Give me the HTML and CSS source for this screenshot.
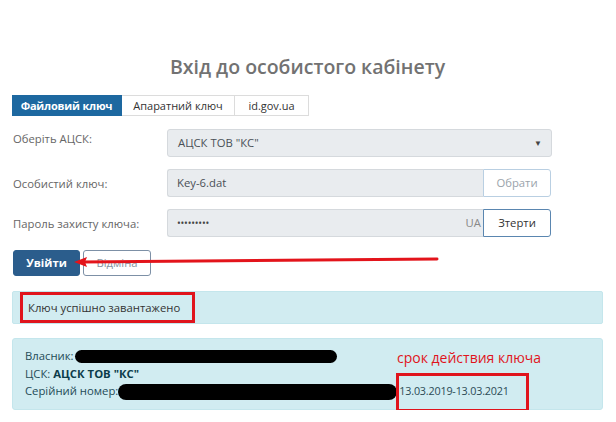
FILE: index.html
```html
<!DOCTYPE html>
<html lang="uk">
<head>
<meta charset="utf-8">
<title>Вхід до особистого кабінету</title>
<link rel="stylesheet" href="styles.css">
</head>
<body>
<div class="page">
  <h1 class="title">Вхід до особистого кабінету</h1>
  <div class="tabs">
    <div class="tab active t1">Файловий ключ</div>
    <div class="tab t2">Апаратний ключ</div>
    <div class="tab t3">id.gov.ua</div>
  </div>
  <div class="form">
    <div class="row top">
      <div class="label">Оберіть АЦСК:</div>
      <div class="field select"><span>АЦСК ТОВ "КС"</span><span class="caret">▼</span></div>
    </div>
    <div class="row">
      <div class="label">Особистий ключ:</div>
      <div class="group">
        <div class="field grow">Key-6.dat</div>
        <div class="addon light">Обрати</div>
      </div>
    </div>
    <div class="row">
      <div class="label">Пароль захисту ключа:</div>
      <div class="group">
        <div class="field grow pass"><span class="dots">•••••••••</span><span class="lang">UA</span></div>
        <div class="addon dark">Зтерти</div>
      </div>
    </div>
  </div>
  <div class="actions">
    <div class="btn primary">Увійти</div>
    <div class="btn outline">Відміна</div>
    <svg class="arrow" width="440" height="24" viewBox="0 0 440 24">
      <path d="M425 9 L70 12" stroke="#e3141b" stroke-width="3" fill="none" stroke-linecap="round"/>
      <path d="M62 12 L75 7 L73 12 L75 17 Z" fill="#e3141b"/>
    </svg>
  </div>
  <div class="alert"><span class="mark">Ключ успішно завантажено</span></div>
  <div class="info">
    <div class="line">Власник:<span class="blob b1"></span></div>
    <div class="line">ЦСК: <b>АЦСК ТОВ "КС"</b></div>
    <div class="line">Серійний номер:<span class="blob b2"></span><span class="date">13.03.2019-13.03.2021</span></div>
    <div class="note">срок действия ключа</div>
  </div>
</div>
</body>
</html>
```
FILE: styles.css
```css
* { box-sizing: border-box; }
html, body { margin: 0; padding: 0; background: #fff; }
body { font-family: "Open Sans", "Noto Sans", sans-serif; font-size: 11.3px; color: #333; }
.page { width: 616px; padding: 53px 13px 0 12px; }
.title {
  margin: 0; text-align: center; font-size: 19.5px; line-height: 28px;
  font-weight: 600; color: #727272;
}
.tabs { display: flex; margin-top: 14px; height: 21px; }
.tab {
  height: 21px; line-height: 19px; text-align: center;
  border: 1px solid #dcdcdc; border-left: none; color: #333; font-size: 11px;
  background: #fff;
}
.tab.active { background: #1d68a0; border-color: #1d68a0; color: #fff; font-weight: 700; letter-spacing: -0.2px; }
.t1 { width: 110px; }
.t2 { width: 113px; }
.t3 { width: 74px; }
.form { display: flex; flex-direction: column; gap: 12px; margin-top: 13px; }
.row { display: flex; align-items: center; height: 28px; }
.row.top { align-items: flex-start; }
.label { width: 155px; padding-left: 1px; color: #666; line-height: 17px; }
.row.top .label { padding-top: 1px; }
.field {
  height: 28px; background: #e9ecef; border: 1px solid #d5d9dd; border-radius: 3px;
  color: #495057; line-height: 26px; padding: 0 9px;
}
.select { width: 385px; display: flex; justify-content: space-between; padding-left: 10px; }
.caret { font-size: 8px; color: #444; }
.group { display: flex; width: 384px; height: 28px; }
.grow { flex: 1; border-radius: 3px 0 0 3px; border-right: none; }
.pass { display: flex; justify-content: space-between; padding-right: 2px; }
.dots { font-size: 10px; letter-spacing: -0.2px; color: #444; }
.lang { color: #888; }
.addon {
  width: 68px; height: 28px; line-height: 26px; text-align: center; background: #fff;
  border-radius: 0 3px 3px 0;
}
.addon.light { border: 1px solid #b9cfe2; color: #9aa3ab; }
.addon.dark { border: 1px solid #5a86b0; color: #333; }
.actions { position: relative; display: flex; gap: 3px; margin-top: 13px; height: 26px; padding-left: 1px; }
.btn { height: 26px; line-height: 24px; border-radius: 3px; text-align: center; }
.primary { width: 67px; background: #2b5d8c; border: 1px solid #2b5d8c; color: #fff; font-weight: 700; }
.outline { width: 68px; border: 1px solid #7d90a6; color: #8593a1; background: #fff; }
.arrow { position: absolute; left: 0; top: 0; }
.alert {
  margin-top: 15px; background: #d1ecf1; border: 1px solid #c4e6ec; border-radius: 2px;
  height: 33px; padding: 0 0 0 7px; display: flex; align-items: center;
}
.mark { border: 3px solid #e0141c; padding: 4px 12px 4px 5px; line-height: 17px; color: #333; display: inline-block; }
.info {
  position: relative; margin-top: 14px; background: #d1ecf1; border: 1px solid #c4e6ec;
  border-radius: 3px; padding: 8px 12px 9px; color: #1f4b57; line-height: 17.5px;
}
.info b { color: #0c3c4a; }
.blob { display: inline-block; background: #000; border-radius: 8px; vertical-align: middle; }
.b1 { width: 262px; height: 13px; margin-left: 1px; }
.b2 { width: 279px; height: 16px; }
.date { position: relative; color: #2c4b55; margin-left: 2px; font-size: 10.8px; letter-spacing: -0.2px; }
.date::after {
  content: ""; position: absolute; left: -3px; top: -10px; width: 127px; height: 33px;
  border: 3px solid #e0141c;
}
.note { position: absolute; left: 384px; top: 9px; font-size: 14px; line-height: 20px; color: #e0141c; letter-spacing: 0; }
```
